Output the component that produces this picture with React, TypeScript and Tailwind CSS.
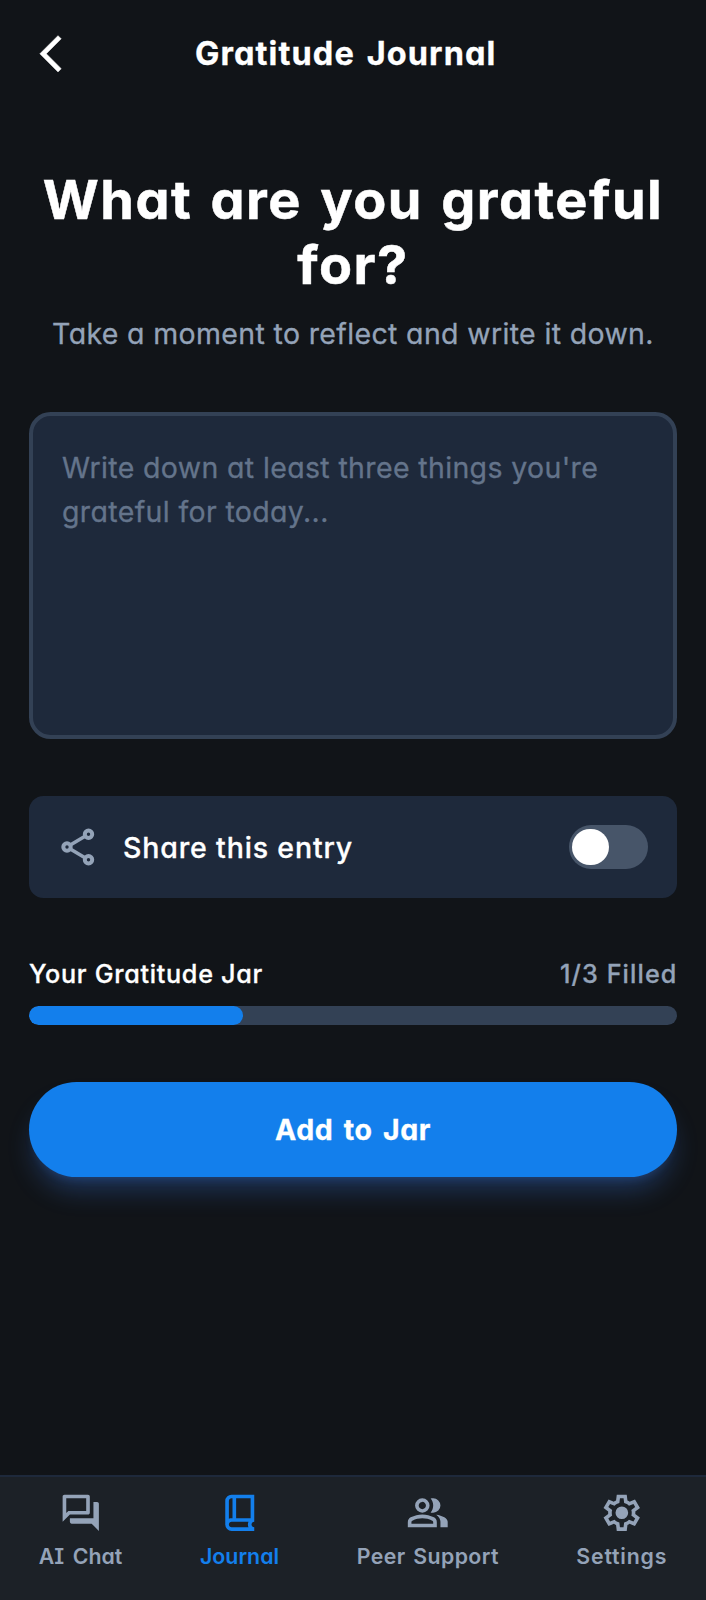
import { useState } from "react";

const NAV_ITEMS = [
  {
    label: "AI Chat",
    spacing: "tracking-[0.05px] [word-spacing:3px]",
    path: "M15 4v7H5.17L4 12.17V4h11zm1-2H3c-.55 0-1 .45-1 1v14l4-4h10c.55 0 1-.45 1-1V3c0-.55-.45-1-1-1zm5 4h-2v9H6v2c0 .55.45 1 1 1h11l4 4V7c0-.55-.45-1-1-1z",
  },
  {
    label: "Journal",
    active: true,
    spacing: "tracking-[0.05px]",
    path: "M6 15.325q.35-.175.725-.25T7.5 15H8V4h-.5q-.625 0-1.062.438T6 5.5v9.825ZM10 15h8V4h-8v11ZM7.5 22q-1.45 0-2.475-1.025T4 18.5v-13q0-1.45 1.025-2.475T7.5 2H20v15q-.625 0-1.062.438T18.5 18.5q0 .625.438 1.063T20 20v2H7.5Zm0-2h9.325q-.15-.35-.237-.712T16.5 18.5q0-.4.075-.775t.25-.725H7.5q-.65 0-1.075.438T6 18.5q0 .65.425 1.075T7.5 20Z",
  },
  {
    label: "Peer Support",
    spacing: "tracking-[0.4px] [word-spacing:2px]",
    path: "M1 20v-2.8q0-.85.438-1.562T2.6 14.55q1.55-.775 3.15-1.163T9 13t3.25.388 3.15 1.162q.725.375 1.163 1.088T17 17.2V20zm18 0v-3q0-1.1-.612-2.113T16.65 13.15q1.275.15 2.4.513t2.1.887q.9.5 1.375 1.112T23 17v3zM9 12q-1.65 0-2.825-1.175T5 8t1.175-2.825T9 4t2.825 1.175T13 8t-1.175 2.825T9 12m10-4q0 1.65-1.175 2.825T15 12q-.275 0-.7-.062T13.6 11.8q.675-.8 1.038-1.775T15 8t-.363-2.025T13.6 4.2q.35-.125.7-.163T15 4q1.65 0 2.825 1.175T19 8M3 18h12v-.8q0-.275-.138-.5T14.5 16.35q-1.35-.675-2.725-1.012T9 15t-2.775.338T3.5 16.35q-.225.125-.363.35T3 17.2zm6-8q.825 0 1.413-.588T11 8t-.588-1.413T9 6t-1.413.588T7 8t.588 1.413T9 10",
  },
  {
    label: "Settings",
    spacing: "tracking-[0.8px]",
    path: "M9.25 22l-.4-3.2q-.325-.125-.612-.3t-.563-.375L4.7 19.375l-2.75-4.75 2.575-1.95Q4.5 12.5 4.5 12.338v-.675q0-.163.025-.338L1.95 9.375l2.75-4.75 2.975 1.25q.275-.2.575-.375t.6-.3l.4-3.2h5.5l.4 3.2q.325.125.613.3t.562.375l2.975-1.25 2.75 4.75-2.575 1.95q.025.175.025.338v.674q0 .163-.05.338l2.575 1.95-2.75 4.75-2.95-1.25q-.275.2-.575.375t-.6.3l-.4 3.2zm1.75-2h1.975l.35-2.65q.775-.2 1.438-.587t1.212-.938l2.475 1.025.975-1.7-2.15-1.625q.125-.35.175-.737T17.5 12t-.05-.787-.175-.738l2.15-1.625-.975-1.7-2.475 1.05q-.55-.575-1.212-.962t-1.438-.588L13 4h-1.975l-.35 2.65q-.775.2-1.437.588t-1.213.937L5.55 7.15l-.975 1.7 2.15 1.6q-.125.375-.175.75t-.05.8q0 .4.05.775t.175.75l-2.15 1.625.975 1.7 2.475-1.05q.55.575 1.213.963t1.437.587zm1.05-4.5q1.45 0 2.475-1.025T15.55 12t-1.025-2.475T12.05 8.5q-1.475 0-2.487 1.025T8.55 12t1.013 2.475T12.05 15.5",
  },
];

function Header() {
  return (
    <header className="flex h-[107px] items-center pl-[29px] pr-[87px]">
      <button type="button" aria-label="Back" className="shrink-0">
        <svg viewBox="0 0 24 24" className="size-[43.5px] fill-white stroke-white stroke-[0.3]">
          <path d="M17.77 3.77L16 2 6 12l10 10 1.77-1.77L9.54 12z" />
        </svg>
      </button>
      <h1 className="flex-1 pt-[1px] text-center text-[32.5px] leading-[40px] font-bold tracking-[1.1px] [word-spacing:3px] [-webkit-text-stroke:0.3px_currentColor]">
        Gratitude Journal
      </h1>
    </header>
  );
}

function ShareRow() {
  const [shared, setShared] = useState(false);
  return (
    <div className="mt-[57.5px] flex h-[102px] items-center justify-between rounded-[14.5px] bg-[#1e293b] pr-[29px] pl-[27px]">
      <div className="flex items-center gap-[23px]">
        <svg viewBox="0 0 44 44" className="size-[44px] fill-none stroke-[#94a3b8]">
          <path strokeWidth="3.6" d="M29 11.2 14.3 20M29 32.8 14.3 24" />
          <circle cx="32.5" cy="9.3" r="3.7" strokeWidth="4" />
          <circle cx="11" cy="22" r="3.7" strokeWidth="4" />
          <circle cx="32.5" cy="34.7" r="3.7" strokeWidth="4" />
        </svg>
        <span className="pt-[2px] text-[28.5px] leading-[43.5px] font-medium tracking-[0.85px] [-webkit-text-stroke:0.3px_currentColor]">
          Share this entry
        </span>
      </div>
      <button
        type="button"
        role="switch"
        aria-checked={shared}
        onClick={() => setShared(!shared)}
        className={`flex h-[43.5px] w-[79.5px] items-center rounded-full px-[3.6px] ${shared ? "justify-end bg-[#137fec]" : "justify-start bg-[#475569]"}`}
      >
        <span className="size-[36.5px] rounded-full bg-white" />
      </button>
    </div>
  );
}

function JarProgress() {
  return (
    <section className="mt-[58px]">
      <div className="flex justify-between text-[25.2px] leading-[36px] font-medium [-webkit-text-stroke:0.3px_currentColor]">
        <span className="tracking-[0.7px]">Your Gratitude Jar</span>
        <span className="-mr-[0.5px] tracking-[1.1px] text-[#94a3b8]">1/3 Filled</span>
      </div>
      <div className="mt-[14px] h-[18.5px] overflow-hidden rounded-full bg-[#334155]">
        <div className="h-full w-[33%] rounded-full bg-[#137fec]" />
      </div>
    </section>
  );
}

function BottomNav() {
  return (
    <nav className="flex h-[125px] justify-around border-t-2 border-[#1e293b] bg-[#1c2127] pt-[13.5px]">
      {NAV_ITEMS.map((item) => (
        <a
          key={item.label}
          href="#"
          className={`flex flex-col items-center gap-[8px] ${item.active ? "text-[#137fec]" : "text-[#94a3b8]"}`}
        >
          <svg viewBox="0 0 24 24" className="size-[43.5px] fill-current">
            <path fillRule="evenodd" d={item.path} />
          </svg>
          <span className={`text-[21.3px] leading-[29px] font-semibold whitespace-nowrap ${item.spacing}`}>
            {item.label}
          </span>
        </a>
      ))}
    </nav>
  );
}

export default function App() {
  return (
    <div className="flex h-[1600px] w-full flex-col bg-[#111418] font-[Inter,sans-serif] text-white [font-feature-settings:'cv11','cv08']">
      <Header />
      <main className="flex flex-1 flex-col px-[29px] pt-[60px]">
        <h2 className="-mx-2 text-center text-[54px] leading-[65.3px] font-bold tracking-[1.5px] [word-spacing:4px] [-webkit-text-stroke:0.5px_currentColor]">
          What are you grateful for?
        </h2>
        <p className="mt-[14px] text-center text-[28.5px] leading-[43.5px] tracking-[0.35px] text-[#94a3b8] [-webkit-text-stroke:0.3px_currentColor]">
          Take a moment to reflect and write it down.
        </p>
        <textarea
          placeholder="Write down at least three things you're grateful for today..."
          className="mt-[57px] block h-[326.5px] w-full resize-none rounded-[21.7px] border-4 border-[#334155] bg-[#1e293b] px-[29px] pt-[30px] text-[28.5px] leading-[43.5px] tracking-[0.36px] outline-none placeholder:text-[#64748b] [-webkit-text-stroke:0.3px_#64748b]"
        />
        <ShareRow />
        <JarProgress />
        <button
          type="button"
          className="mt-[57.5px] h-[94.5px] w-full rounded-full bg-[#137fec] pt-[2px] text-[28.5px] font-bold tracking-[0.6px] shadow-[0_18px_27px_-5.4px_rgba(59,130,246,0.3),0_7px_11px_-7px_rgba(59,130,246,0.3)] [word-spacing:3px] [-webkit-text-stroke:0.3px_currentColor]"
        >
          Add to Jar
        </button>
      </main>
      <BottomNav />
    </div>
  );
}
